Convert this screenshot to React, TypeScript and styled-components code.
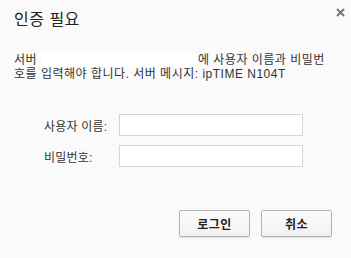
import React from "react";
import styled, { createGlobalStyle } from "styled-components";

const GlobalStyle = createGlobalStyle`
  html, body {
    margin: 0;
    padding: 0;
    background: #fafafa;
  }
  body {
    font-family: "Liberation Sans", "Noto Sans CJK KR", sans-serif;
  }
`;

const Dialog = styled.div`
  position: relative;
  box-sizing: border-box;
  width: 351px;
  height: 258px;
  background: #fafafa;
  padding: 10px 19px 0 14px;
  display: flex;
  flex-direction: column;
  color: #333333;
`;

const Title = styled.h1`
  margin: 0;
  font-size: 16px;
  font-weight: normal;
  line-height: 20px;
  letter-spacing: 0.5px;
  color: #222222;
`;

const CloseButton = styled.button`
  position: absolute;
  top: 5px;
  right: 4px;
  width: 14px;
  height: 14px;
  padding: 0;
  border: none;
  background: transparent;
  display: flex;
  align-items: center;
  justify-content: center;
  cursor: pointer;
`;

const Message = styled.p`
  margin: 23px 0 0;
  font-size: 12px;
  line-height: 14px;
  letter-spacing: 0.5px;
  color: #333333;
  word-break: break-all;
`;

const Redacted = styled.span`
  display: inline-block;
  width: 157px;
  height: 14px;
  vertical-align: top;
  background: #ffffff;
`;

const FormGrid = styled.div`
  margin: 33px 0 0 30px;
  display: grid;
  grid-template-columns: 75px 184px;
  row-gap: 9px;
  align-items: center;
`;

const Label = styled.label`
  font-size: 12px;
  letter-spacing: 0.2px;
  color: #333333;
`;

const Input = styled.input`
  box-sizing: border-box;
  width: 184px;
  height: 22px;
  border: 1px solid #d6d6d6;
  background: #ffffff;
  outline: none;
  font-size: 12px;
  padding: 0 4px;
`;

const ButtonRow = styled.div`
  margin-top: 43px;
  display: flex;
  justify-content: flex-end;
  gap: 11px;
`;

const Button = styled.button`
  box-sizing: border-box;
  width: 71px;
  height: 27px;
  border: 1px solid #b4b4b4;
  border-radius: 2px;
  background: linear-gradient(#fbfbfb, #f1f1f1);
  box-shadow: 0 1px 1px rgba(0, 0, 0, 0.1);
  font-family: "Liberation Sans", "Noto Sans CJK KR", sans-serif;
  font-size: 12px;
  font-weight: bold;
  letter-spacing: 0.5px;
  color: #222222;
  padding: 0;
`;

export default function App() {
  return (
    <>
      <GlobalStyle />
      <Dialog>
        <CloseButton aria-label="닫기">
          <svg width="9" height="9" viewBox="0 0 9 9">
            <path d="M1 1L8 8M8 1L1 8" stroke="#777" strokeWidth="2" />
          </svg>
        </CloseButton>
        <Title>인증 필요</Title>
        <Message>
          서버 <Redacted />에 사용자 이름과 비밀번호를 입력해야 합니다. 서버 메시지: ipTIME N104T
        </Message>
        <FormGrid>
          <Label htmlFor="user">사용자 이름:</Label>
          <Input id="user" type="text" />
          <Label htmlFor="pass">비밀번호:</Label>
          <Input id="pass" type="password" />
        </FormGrid>
        <ButtonRow>
          <Button>로그인</Button>
          <Button>취소</Button>
        </ButtonRow>
      </Dialog>
    </>
  );
}
